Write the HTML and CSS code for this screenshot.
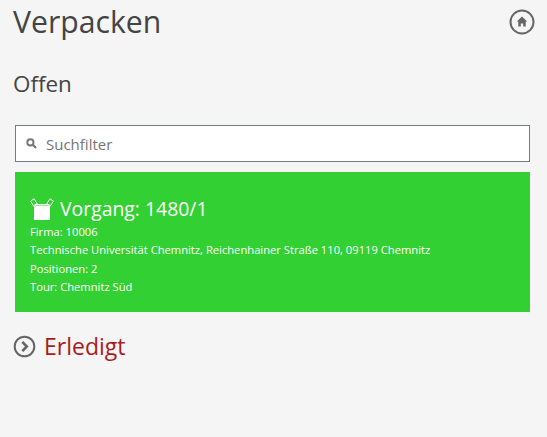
FILE: index.html
```html
<!DOCTYPE html>
<html lang="de">
<head>
<meta charset="utf-8">
<title>Verpacken</title>
<link rel="stylesheet" href="styles.css">
</head>
<body>
<header class="top">
  <h1 class="title">Verpacken</h1>
  <a class="home" href="#" aria-label="Home">
    <svg width="26" height="26" viewBox="0 0 26 26"><circle cx="13" cy="13" r="11.5" fill="none" stroke="#666" stroke-width="2"/><path d="M13 7.6 L18.2 12.6 H16.7 V17.6 H14.2 V14.4 H11.8 V17.6 H9.3 V12.6 H7.8 Z" fill="#666"/></svg>
  </a>
</header>
<h2 class="sub">Offen</h2>
<div class="search">
  <svg class="lens" width="11" height="11" viewBox="0 0 11 11"><circle cx="4.4" cy="4.4" r="3.1" fill="none" stroke="#777" stroke-width="1.9"/><path d="M6.8 6.8 L10 10" stroke="#777" stroke-width="2.2"/></svg>
  <span class="placeholder">Suchfilter</span>
</div>
<section class="card">
  <div class="card-head">
    <svg class="box" width="24" height="24" viewBox="0 0 24 24"><path d="M4 7.5 H20 V22 H4 Z" fill="#fff"/><path d="M4.5 6.5 H19.5" stroke="#fff" stroke-width="1"/><path d="M4 8.5 L0.6 3 L4.2 0.8 L7.2 6 Z M20 8.5 L23.4 3 L19.8 0.8 L16.8 6 Z" fill="none" stroke="#fff" stroke-width="1"/></svg>
    <span class="card-title">Vorgang: 1480/1</span>
  </div>
  <p class="line">Firma: 10006</p>
  <p class="line">Technische Universität Chemnitz, Reichenhainer Straße 110, 09119 Chemnitz</p>
  <p class="line">Positionen: 2</p>
  <p class="line">Tour: Chemnitz Süd</p>
</section>
<div class="done">
  <svg width="23" height="23" viewBox="0 0 23 23"><circle cx="11.5" cy="11.5" r="9.8" fill="none" stroke="#666" stroke-width="2"/><path d="M9.3 6.8 L13.8 11.5 L9.3 16.2" fill="none" stroke="#666" stroke-width="2.6"/></svg>
  <span class="done-text">Erledigt</span>
</div>
</body>
</html>
```
FILE: styles.css
```css
html, body { margin: 0; padding: 0; }
body {
  width: 547px;
  height: 437px;
  overflow: hidden;
  background: #f5f5f5;
  font-family: "Open Sans", "Noto Sans", sans-serif;
  color: #444;
}
.top {
  display: flex;
  justify-content: space-between;
  align-items: flex-start;
  padding: 0 12px 0 13px;
}
.title { margin: 0; font-size: 30.2px; font-weight: 400; line-height: 44px; }
.home { display: block; margin-top: 9px; height: 26px; }
.sub { margin: 23px 0 0 13px; font-size: 22.4px; font-weight: 400; line-height: 34px; }
.search {
  box-sizing: border-box;
  display: flex;
  align-items: center;
  gap: 9px;
  margin: 24px 17px 0 15px;
  height: 37px;
  padding-left: 10px;
  background: #fff;
  border: 1px solid #767b85;
}
.placeholder { font-size: 15px; color: #757575; }
.card {
  box-sizing: border-box;
  margin: 10px 17px 0 15px;
  height: 140px;
  padding: 23px 15px 0;
  background: #32d032;
  color: #fff;
}
.card-head { display: flex; align-items: flex-end; gap: 6px; height: 28px; }
.card-title { font-size: 19.4px; line-height: 28px; }
.box { margin-bottom: 1px; }
.line { margin: 0; font-size: 11.2px; line-height: 18.25px; }
.done { display: flex; align-items: center; gap: 8px; margin: 17px 0 0 13px; height: 34px; }
.done-text { font-size: 23px; color: #a81c1c; }
```
